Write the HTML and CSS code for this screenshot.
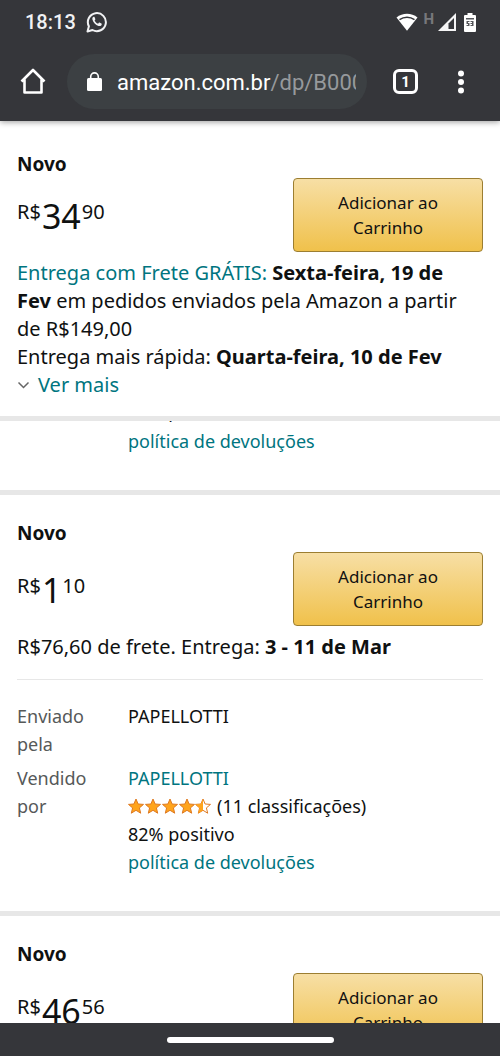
FILE: index.html
```html
<!DOCTYPE html>
<html lang="pt-BR">
<head>
<meta charset="utf-8">
<meta name="viewport" content="width=device-width, initial-scale=1">
<title>Todas as ofertas</title>
<link rel="stylesheet" href="styles.css">
</head>
<body>
<div class="phone">
  <header class="chrome">
    <div class="status">
      <time class="clock">18:13</time>
      <svg class="whatsapp" width="22" height="22" viewBox="0 0 22 22" aria-hidden="true"><path d="M1.500 20.500l1.400-5.200a9 9 0 1 1 3.600 3.700z" fill="none" stroke="#f1f2f4" stroke-width="2" stroke-linejoin="round"/><path d="M7.600 5.800c-1 .5-1.500 1.500-1.100 2.900.8 3 3 5.200 6 6.200 1.600.5 2.900-.2 3.200-1.500.1-.5 0-.7-.3-.9l-1.900-.9c-.3-.1-.5 0-.7.2l-.7.900c-1.600-.6-2.800-1.700-3.500-3.200l.7-.9c.1-.2.1-.4 0-.6l-.8-1.900c-.2-.4-.5-.5-.9-.3z" fill="#f1f2f4"/></svg>
      <span class="spacer"></span>
      <svg width="22" height="20" viewBox="0 0 22 20" aria-hidden="true"><path d="M.5 5.500C6.500.6 15.500.6 21.500 5.500L11 18.800z" fill="#fff"/><path d="M3.500 7.600c4.500-3.300 10.500-3.300 15 0" fill="none" stroke="#35363a" stroke-width="1.500"/></svg>
      <span class="network">H</span>
      <svg class="signal" width="18" height="18" viewBox="0 0 18 18" aria-hidden="true"><path d="M0 18L18 0v18z" fill="#f5f5f6"/><path d="M10.500 10.500L16 5v11h-5.500z" fill="#35363a"/></svg>
      <svg width="12" height="19" viewBox="0 0 12 19" aria-hidden="true"><path d="M3.500 0h5v2H11q1 0 1 1v15q0 1-1 1H1q-1 0-1-1V3q0-1 1-1h2.500z" fill="#fff"/><path d="M2 5h8v1.500H2zM2.500 8h3v1H4v1h1.500v3h-3v-1H4v-1H2.500zM6.500 8h3v5h-3v-1H8v-1H6.500v-1H8V9H6.500z" fill="#55565a"/></svg>
    </div>
    <nav class="toolbar">
      <button class="tool" aria-label="Página inicial"><svg width="26" height="27" viewBox="0 0 26 27"><path d="M1.500 13.500L13 2l11.500 11.500M4.500 11.500V24.500h17V11.500" fill="none" stroke="#fff" stroke-width="2.600" stroke-linejoin="round"/></svg></button>
      <div class="address">
        <svg width="15" height="19" viewBox="0 0 15 19" aria-hidden="true"><rect y="6" width="15" height="13" rx="1.500" fill="#fff"/><path d="M3.700 7V4.700a3.800 3.800 0 0 1 7.600 0V7" fill="none" stroke="#fff" stroke-width="1.600"/></svg>
        <span class="url">amazon.com.br<span class="path">/dp/B000</span></span>
      </div>
      <button class="tool tabs" aria-label="Abas abertas">1</button>
      <button class="tool" aria-label="Mais opções"><svg width="8" height="24" viewBox="0 0 8 24"><circle cx="4" cy="3.500" r="3" fill="#fff"/><circle cx="4" cy="12" r="3" fill="#fff"/><circle cx="4" cy="20.500" r="3" fill="#fff"/></svg></button>
    </nav>
  </header>

  <main class="page">
    <section class="offer pinned">
      <h2 class="condition">Novo</h2>
      <div class="buy">
        <p class="price"><span class="minor">R$</span><span class="major">34</span><span class="minor">90</span></p>
        <button class="cart">Adicionar ao Carrinho</button>
      </div>
      <p class="delivery"><a href="#">Entrega com Frete GRÁTIS:</a> <b>Sexta-feira, 19 de Fev</b> em pedidos enviados pela Amazon a partir de R$149,00</p>
      <p class="line">Entrega mais rápida: <b>Quarta-feira, 10 de Fev</b></p>
      <a class="more" href="#"><svg width="13" height="8" viewBox="0 0 13 8" aria-hidden="true"><path d="M1.500 1.500l5 5 5-5" fill="none" stroke="#666" stroke-width="1.500"/></svg>Ver mais</a>
    </section>

    <section class="offer scrolled">
      <div class="seller-info">
        <p class="cut"><span>82% positivo</span></p>
        <a href="#">política de devoluções</a>
      </div>
    </section>

    <section class="offer">
      <h2 class="condition">Novo</h2>
      <div class="buy">
        <p class="price"><span class="minor">R$</span><span class="major">1</span><span class="minor">10</span></p>
        <button class="cart">Adicionar ao Carrinho</button>
      </div>
      <p class="delivery">R$76,60 de frete. Entrega: <b>3 - 11 de Mar</b></p>
      <dl class="details">
        <dt>Enviado pela</dt>
        <dd>PAPELLOTTI</dd>
        <dt>Vendido por</dt>
        <dd>
          <a href="#">PAPELLOTTI</a>
          <div class="rating">
            <svg width="84" height="17" viewBox="0 0 84 17" role="img" aria-label="4,5 de 5 estrelas">
              <defs><path id="star" d="M8 1l2.100 5 5.400.4-4.100 3.500 1.300 5.300L8 12.300l-4.700 2.900 1.300-5.300L.5 6.400 5.900 6z"/></defs>
              <g fill="#ffa41c" stroke="#de7921" stroke-width="1"><use href="#star"/><use href="#star" x="17"/><use href="#star" x="34"/><use href="#star" x="51"/></g>
              <use href="#star" x="67" fill="#fff" stroke="#de7921"/>
              <path d="M75 1v11.300l-4.700 2.900 1.300-5.300-4.100-3.500 5.400-.4z" fill="#ffa41c"/>
            </svg>
            <span>(11 classificações)</span>
          </div>
          <p class="line">82% positivo</p>
          <a href="#">política de devoluções</a>
        </dd>
      </dl>
    </section>

    <section class="offer">
      <h2 class="condition">Novo</h2>
      <div class="buy">
        <p class="price"><span class="minor">R$</span><span class="major">46</span><span class="minor">56</span></p>
        <button class="cart">Adicionar ao Carrinho</button>
      </div>
    </section>
  </main>

  <footer class="gesture"><span class="pill"></span></footer>
</div>
</body>
</html>
```
FILE: styles.css
```css
* { box-sizing: border-box; }
body {
  margin: 0;
  background: #fff;
  color: #0f1111;
  font-family: "Noto Sans", "Open Sans", sans-serif;
  font-size: 20px;
  line-height: 28px;
}
h2, p, dl, dd { margin: 0; }
a { color: #007580; text-decoration: none; }
b { font-weight: 700; }
button { font: inherit; cursor: pointer; }

.phone { display: flex; flex-direction: column; height: 100vh; overflow: hidden; }

.chrome {
  flex: none;
  position: relative;
  background: #35363a;
  color: #fff;
  font-family: Roboto, sans-serif;
  box-shadow: 0 1px 6px rgba(0, 0, 0, .4);
}
.status { display: flex; align-items: center; height: 44px; padding: 0 24px 0 25px; }
.clock { font-size: 20px; font-weight: 500; color: #f1f2f4; }
.whatsapp { margin-left: 10px; }
.spacer { flex: 1; }
.network { margin: 0 4px 6px 5px; font-size: 15px; font-weight: 700; line-height: 16px; color: #77787c; }
.signal { margin-right: 8px; }

.toolbar { display: flex; align-items: center; padding: 10px 35px 12px 20px; }
.tool { display: grid; place-items: center; padding: 0; border: 0; background: none; color: #fff; }
.address {
  display: flex;
  flex: 1;
  align-items: center;
  gap: 15px;
  min-width: 0;
  height: 55px;
  margin: 0 26px 0 21px;
  padding: 0 11px 0 20px;
  border-radius: 28px;
  background: #3c4043;
}
.address svg { flex: none; }
.url { flex: 1; overflow: hidden; padding-top: 2px; font-size: 22px; white-space: nowrap; }
.path { color: #96999c; }
.tabs {
  width: 25px;
  height: 25px;
  margin-right: 39px;
  border: 3px solid #fff;
  border-radius: 6px;
  font-size: 15px;
  font-weight: 700;
  line-height: 16px;
}

.page { flex: 1; min-height: 0; overflow: hidden; }
.offer { padding: 24px 17px 35px; border-bottom: 5px solid #e7e7e7; }
.pinned { padding-top: 29px; padding-bottom: 17px; }
.scrolled { padding-top: 0; }
.condition { font-size: 19px; font-weight: 700; line-height: 28px; }
.buy { display: flex; justify-content: space-between; align-items: center; margin-top: 5px; }
.pinned .buy { margin-top: 0; }
.price { display: flex; align-items: flex-start; gap: 1px; padding-top: 2px; line-height: 32px; }
.minor { font-size: 20px; line-height: 24px; }
.major { font-size: 34px; }
.cart {
  width: 190px;
  padding: 11px 30px;
  border: 1px solid #9c7e31;
  border-radius: 4px;
  background: linear-gradient(#f7dfa5, #f0c14b);
  color: #111;
  font-size: 17px;
  line-height: 25px;
}
.delivery { margin-top: 7px; padding-right: 16px; }
.more { display: flex; align-items: center; gap: 8px; }

.details {
  display: grid;
  grid-template-columns: 80px 1fr;
  gap: 6px 31px;
  margin-top: 18px;
  padding-top: 22px;
  border-top: 1px solid #e7e7e7;
  font-size: 18px;
}
.details dt { color: #565959; }
.details a { display: block; }
.rating { display: flex; align-items: center; gap: 5px; }
.seller-info { padding-left: 111px; font-size: 18px; }
.seller-info a { display: block; }
.cut { display: flex; align-items: flex-end; height: 6px; overflow: hidden; line-height: 32px; }

.gesture { flex: none; display: grid; place-items: center; height: 33px; background: #35363a; }
.pill { width: 167px; height: 6px; border-radius: 3px; background: #fff; }
```
